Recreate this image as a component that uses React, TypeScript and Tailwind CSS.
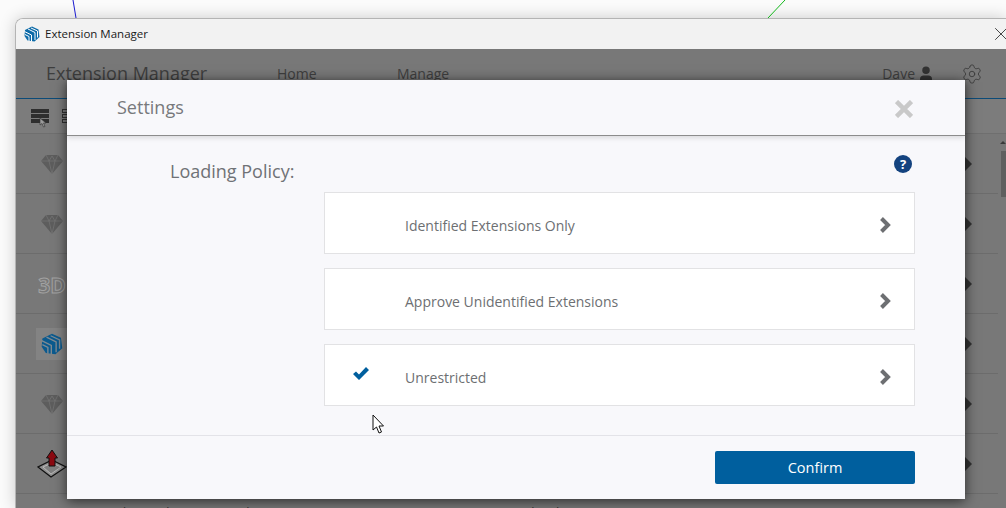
import { Settings, User, X } from "lucide-react"

const policies = [
    { label: "Identified Extensions Only", checked: false },
    { label: "Approve Unidentified Extensions", checked: false },
    { label: "Unrestricted", checked: true },
]

function SketchUpLogo({ className, fill = "#0d6ba8", line = "#ffffff" }: { className?: string; fill?: string; line?: string }) {
    return (
        <svg viewBox="0 0 32 32" className={className}>
            <path d="M16 1 29 7 31 22 21 31 7 29 1 20 2 8z" fill={fill} />
            <path d="M1 11 15 18V31M2 17l8 4v9M8 6l14 7v15M14 4l13 6v13" fill="none" stroke={line} strokeWidth="2" />
        </svg>
    )
}

function Gem() {
    return (
        <svg viewBox="0 0 24 20" className="w-6 h-5" fill="#5d5d5d">
            <path d="M6 1h12l5 6-11 13L1 7z" />
            <path d="M1 7h22M6 1l3 6 3-5 3 5 3-6M9 7l3 13 3-13" stroke="#777" strokeWidth="0.7" fill="none" />
        </svg>
    )
}

function ExtensionRow({ icon }: { icon: React.ReactNode }) {
    return (
        <div className="h-[60px] border-b border-[#6c6c6c] flex items-center justify-between pl-[20px] pr-[26px] shrink-0">
            <div className="w-[32px] flex justify-center">{icon}</div>
            <div className="w-0 h-0 border-y-[7px] border-y-transparent border-l-[7px] border-l-[#333]" />
        </div>
    )
}

export default function App() {
    return (
        <div className="relative w-[1006px] h-[508px] overflow-hidden bg-[#fbfbfb] pt-[18px] pl-[15px] font-['Open_Sans',sans-serif]">
            {/* model axes behind the window */}
            <svg className="absolute left-0 top-0 z-10" width="1006" height="19">
                <line x1="73" y1="0" x2="76" y2="18" stroke="#1a1ad0" />
                <line x1="785" y1="0" x2="768" y2="18" stroke="#12b81a" />
            </svg>

            <div className="relative w-[991px] h-[490px] rounded-tl-lg border-t border-l border-[#b4b4b4] shadow-[0_0_16px_rgba(0,0,0,0.2)] overflow-hidden">
                <div className="h-[30px] bg-[#f2f2f2] flex items-center pl-[8px]">
                    <SketchUpLogo className="w-[16px] h-[16px]" />
                    <span className="ml-[5px] text-[11.5px] text-[#1a1a1a]">Extension Manager</span>
                    <X className="ml-auto -mr-[6px] w-[22px] h-[22px] text-[#222]" strokeWidth={0.9} />
                </div>

                <div className="h-[460px] bg-[#787878] flex flex-col">
                    <div className="h-[50px] border-b border-[#0c4b78] flex items-center text-[#3e3e3e] shrink-0">
                        <span className="ml-[30px] w-[231px] text-[18px]">Extension Manager</span>
                        <span className="w-[120px] text-[14px]">Home</span>
                        <span className="text-[14px]">Manage</span>
                        <span className="ml-auto text-[14px]">Dave</span>
                        <User className="ml-[2px] w-[18px] h-[18px] text-[#333] fill-[#333]" />
                        <Settings className="ml-[26px] mr-[23px] w-[22px] h-[22px] text-[#3d3d3d]" strokeWidth={1} />
                    </div>

                    <div className="h-[35px] bg-[#7c7c7c] border-b border-[#6f6f6f] flex items-center gap-[13px] pl-[15px] shrink-0">
                        <div className="relative flex flex-col gap-[1px] w-[18px]">
                            <div className="h-[4px] bg-[#2e2e2e]" />
                            <div className="h-[4px] bg-[#2e2e2e]" />
                            <div className="h-[4px] bg-[#2e2e2e]" />
                            <svg className="absolute left-[8px] top-[9px]" width="7" height="10" viewBox="0 0 7 10">
                                <path d="M1 0v7l2-1.500 1.500 3.500 1.500-.5-1.500-3.500h2.500z" fill="#9a9a9a" stroke="#333" strokeWidth="0.6" />
                            </svg>
                        </div>
                        <div className="flex flex-col gap-[1px] w-[16px]">
                            <div className="h-[4px] border border-[#333]" />
                            <div className="h-[4px] border border-[#333]" />
                            <div className="h-[4px] border border-[#333]" />
                        </div>
                    </div>

                    <div className="flex flex-col pr-[8px]">
                        <ExtensionRow icon={<Gem />} />
                        <ExtensionRow icon={<Gem />} />
                        <ExtensionRow
                            icon={
                                <span className="text-[21px] font-bold text-transparent [-webkit-text-stroke:1px_#a2a2a2] leading-none mt-[3px]">3D</span>
                            }
                        />
                        <ExtensionRow
                            icon={
                                <div className="bg-[#838383] w-[32px] h-[32px] flex items-center justify-center">
                                    <SketchUpLogo className="w-[22px] h-[22px]" fill="#0b5a8e" line="#7f8a92" />
                                </div>
                            }
                        />
                        <ExtensionRow icon={<Gem />} />
                        <ExtensionRow
                            icon={
                                <svg viewBox="0 0 30 30" className="w-[30px] h-[30px]">
                                    <path d="M15 11 29 18 14 28 1 18z" fill="#8f8f8f" stroke="#111" strokeWidth="1.300" />
                                    <path d="M15 14 24 18 14 25 6 18z" fill="#808080" stroke="#ccc" strokeWidth="0.700" />
                                    <path d="M15 1l5.500 8h-2.500v8h-6V9H9.500z" fill="#8b0a12" stroke="#111" strokeWidth="1" />
                                </svg>
                            }
                        />
                        <div className="flex pl-[94px] text-[13px] text-[#333] leading-[16px] pt-[10px]">
                            <span className="w-[414px]">Advanced Camera Tools</span>
                            <span>Sketch Up</span>
                        </div>
                    </div>
                </div>
                {/* scrollbar */}
                <div className="absolute right-[0px] top-[132px] w-[5px] h-[46px] bg-[#5f5f5f]" />
                <div className="absolute right-[0px] top-[122px] w-0 h-0 border-x-[3px] border-x-transparent border-b-[3px] border-b-[#3a3a3a]" />
            </div>

            {/* settings dialog */}
            <div className="absolute left-[67px] top-[80px] w-[898px] h-[419px] bg-[#f8f8fb] shadow-[0_2px_12px_rgba(0,0,0,0.65)] flex flex-col">
                <div className="h-[56px] border-b border-[#8c8c8c] shadow-[0_2px_5px_rgba(0,0,0,0.12)] flex items-center justify-between pl-[50px] pr-[52px] shrink-0">
                    <span className="text-[18px] text-[#77797c]">Settings</span>
                    <svg width="18" height="18" viewBox="0 0 18 18" className="mt-[2px]">
                        <path d="M1.500 1.500 16.500 16.500M16.500 1.500 1.500 16.500" stroke="#c9c9c9" strokeWidth="4.500" fill="none" />
                    </svg>
                </div>

                <div className="h-[300px] border-b border-[#e3e3e8] relative pt-[56px] pl-[257px] pr-[50px] flex flex-col gap-[14px] shrink-0">
                    <span className="absolute left-[103px] top-[22px] text-[18px] text-[#6f7276]">Loading Policy:</span>
                    <div className="absolute right-[53px] top-[19px] w-[18px] h-[18px] rounded-full bg-[#14437f] text-white flex items-center justify-center text-[13px] font-bold leading-none">?</div>
                    {policies.map((policy) => (
                        <div key={policy.label} className="h-[62px] bg-white border border-[#e2e2e4] flex items-center pl-[28px] pr-[23px]">
                            <div className="w-[52px] shrink-0">
                                {policy.checked && (
                                    <svg width="16" height="13" viewBox="0 0 16 13" className="-mt-[4px]">
                                        <path d="M0 7 3 4.500 6 7.500 13 0 16 3 6 13z" fill="#005f9e" />
                                    </svg>
                                )}
                            </div>
                            <span className="text-[14px] text-[#6d6f72] mt-[4px]">{policy.label}</span>
                            <svg width="12" height="16" viewBox="0 0 12 16" className="ml-auto mt-[4px]">
                                <path d="M2.500 1.500 9 8 2.500 14.500" stroke="#6d6f72" strokeWidth="4" fill="none" />
                            </svg>
                        </div>
                    ))}
                </div>

                <div className="flex-1 flex justify-end items-start pt-[15px] pr-[50px]">
                    <button className="w-[200px] h-[33px] bg-[#005f9e] rounded-[2px] text-white text-[14.5px]">Confirm</button>
                </div>
            </div>

            {/* mouse pointer */}
            <svg className="absolute left-[372px] top-[414px]" width="14" height="20" viewBox="0 0 14 20">
                <path d="M1 1v15l3.500-3 2.500 6 2.500-1-2.500-6h4.500z" fill="#fff" stroke="#111" strokeWidth="1" />
            </svg>
        </div>
    )
}
